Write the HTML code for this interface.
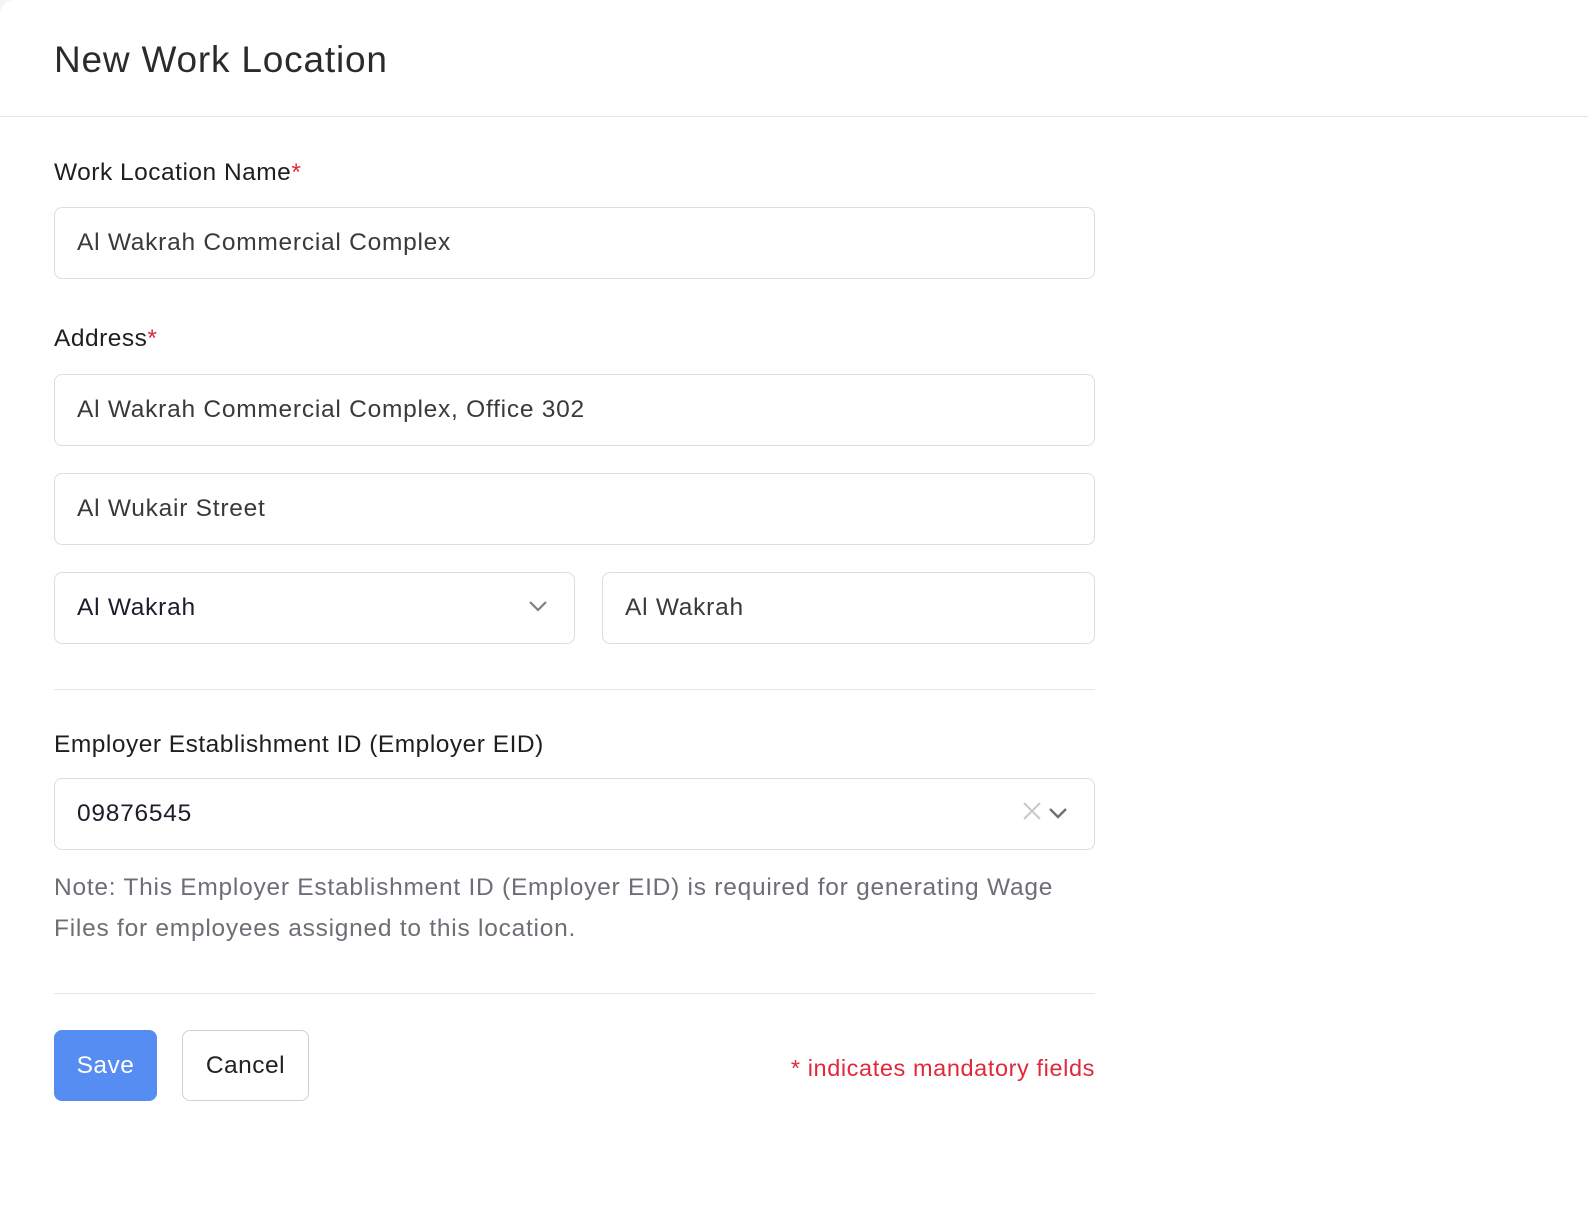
<!DOCTYPE html>
<html><head><meta charset="utf-8"><style>
*{box-sizing:border-box;margin:0;padding:0}
html,body{width:1588px;height:1210px;background:#f4f4f7;overflow:hidden}
body{font-family:"Liberation Sans",Arial,sans-serif;}
.page{position:absolute;left:0;top:0;width:1588px;height:1210px;background:#fff;border-top-left-radius:14px}
.hdr{position:absolute;left:0;top:0;width:1588px;height:117px;border-bottom:1px solid #e6e6ea}
.title{position:absolute;left:54px;top:39px;font-size:37px;color:#2b2b2b;letter-spacing:0.8px}
.lbl{position:absolute;left:54px;font-size:24.5px;color:#1f1f1f;letter-spacing:0.5px}
.lbl span{color:#e0283a}
.inp{position:absolute;height:72px;border:1px solid #dcdce2;border-radius:8px;font-size:24.5px;color:#3a3a3a;padding-left:22px;line-height:70px;letter-spacing:0.75px}
.hr{position:absolute;left:54px;width:1041px;height:1px;background:#e6e6ea}
.note{position:absolute;left:54px;top:868px;width:1030px;font-size:24.5px;line-height:40.5px;color:#6d6f76;letter-spacing:0.75px}
.save{position:absolute;left:54px;top:1030px;width:103px;height:71px;background:#558df2;border-radius:8px;color:#fff;font-size:24.5px;text-align:center;line-height:71px;letter-spacing:0.5px}
.cancel{position:absolute;left:182px;top:1030px;width:127px;height:71px;border:1px solid #cfcfd5;border-radius:8px;color:#222;font-size:24.5px;text-align:center;line-height:69px;letter-spacing:0.5px}
.mand{position:absolute;right:493px;top:1055px;font-size:23.5px;color:#e0283a;letter-spacing:0.6px}
svg{position:absolute}
</style></head><body><div class="page">
<div class="hdr"><div class="title">New Work Location</div></div>
<div class="lbl" style="top:159px">Work Location Name<span>*</span></div>
<div class="inp" style="left:54px;top:207px;width:1041px">Al Wakrah Commercial Complex</div>
<div class="lbl" style="top:325px">Address<span>*</span></div>
<div class="inp" style="left:54px;top:374px;width:1041px">Al Wakrah Commercial Complex, Office 302</div>
<div class="inp" style="left:54px;top:473px;width:1041px">Al Wukair Street</div>
<div class="inp" style="left:54px;top:572px;width:521px;color:#1d1d2a">Al Wakrah</div>
<svg style="left:528px;top:599px" width="20" height="14" viewBox="0 0 20 14"><path d="M2 3l8 8 8-8" fill="none" stroke="#808080" stroke-width="2.2"/></svg>
<div class="inp" style="left:602px;top:572px;width:493px">Al Wakrah</div>
<div class="hr" style="top:689px"></div>
<div class="lbl" style="top:731px">Employer Establishment ID (Employer EID)</div>
<div class="inp" style="left:54px;top:778px;width:1041px;color:#1d1d2a">09876545</div>
<svg style="left:1022px;top:801px" width="20" height="20" viewBox="0 0 20 20"><path d="M2 2l16 16M18 2L2 18" stroke="#c8c8c8" stroke-width="2"/></svg>
<svg style="left:1048px;top:806px" width="20" height="14" viewBox="0 0 20 14"><path d="M2 3l8 8 8-8" fill="none" stroke="#707070" stroke-width="2.4"/></svg>
<div class="note">Note: This Employer Establishment ID (Employer EID) is required for generating Wage Files for employees assigned to this location.</div>
<div class="hr" style="top:993px"></div>
<div class="save">Save</div>
<div class="cancel">Cancel</div>
<div class="mand">* indicates mandatory fields</div>
</div></body></html>
